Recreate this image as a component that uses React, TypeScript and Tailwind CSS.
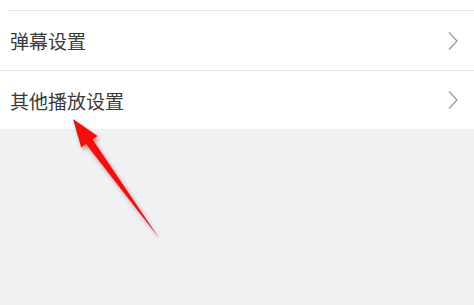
const rows = ['弹幕设置', '其他播放设置']

function Chevron() {
  return (
    <svg width="12" height="20" viewBox="0 0 12 20" className="shrink-0">
      <path d="M2 1.5 L10 10 L2 18.5" fill="none" stroke="#9a9a9a" strokeWidth="1.3" />
    </svg>
  )
}

export default function App() {
  return (
    <div
      className="relative w-[474px] h-[305px] overflow-hidden bg-[#f0f1f3]"
      style={{ fontFamily: '"Noto Sans CJK SC", "Noto Sans", sans-serif' }}
    >
      <div className="bg-white">
        <div className="h-[11px] border-b border-[#e6e6e6] ml-[8px]" />
        {rows.map((label, i) => (
          <div
            key={label}
            className={`flex items-center justify-between pl-[10px] pr-[15px] ${
              i === 0 ? 'h-[60px] border-b border-[#e6e6e6]' : 'h-[58px]'
            }`}
          >
            <span className="text-[19px] leading-none text-[#3a3a3a]">{label}</span>
            <Chevron />
          </div>
        ))}
      </div>

      {/* red annotation arrow */}
      <svg
        className="absolute left-0 top-0 pointer-events-none drop-shadow-[2px_3px_2px_rgba(0,0,0,0.35)]"
        width="474"
        height="305"
        viewBox="0 0 474 305"
      >
        <polygon
          points="73,119 97.5,136 92.6,139.6 159,238 86,144 81.2,147.6"
          fill="#ff0a0a"
        />
      </svg>
    </div>
  )
}
